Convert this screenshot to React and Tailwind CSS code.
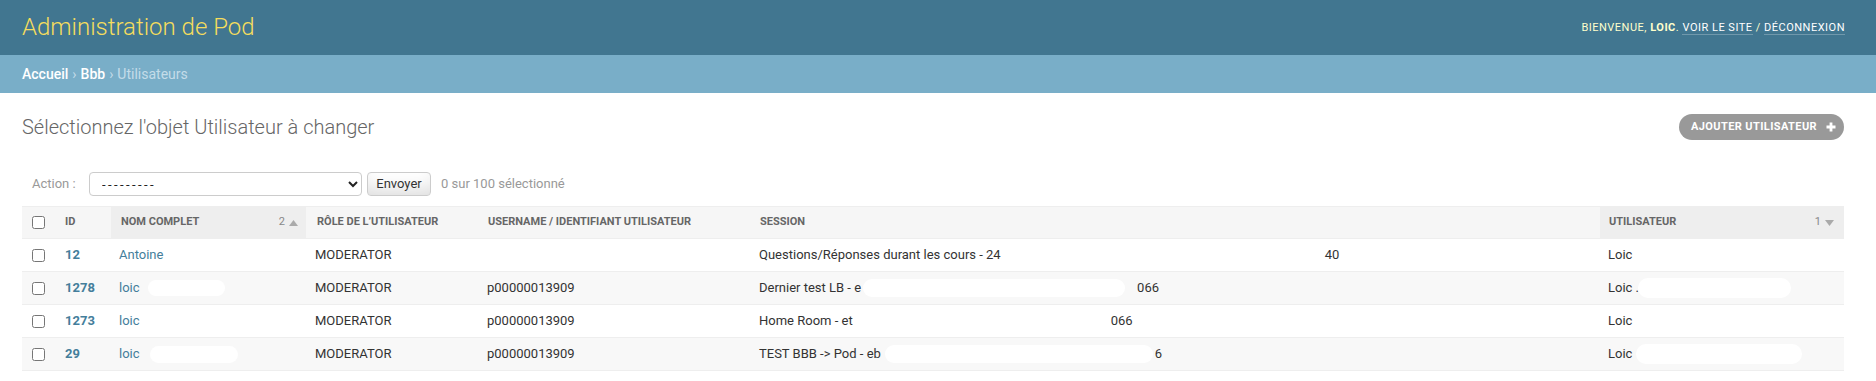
import React from "react";

const Blob = ({ w, ml = 0, h = 18 }) => (
  <span
    className="inline-block bg-white rounded-full align-middle"
    style={{ width: w, height: h, marginLeft: ml }}
  />
);

const SortUp = () => (
  <svg width="9" height="6" viewBox="0 0 9 6" className="inline-block">
    <path d="M0 6 L4.5 0 L9 6 Z" fill="#aaa" />
  </svg>
);
const SortDown = () => (
  <svg width="9" height="6" viewBox="0 0 9 6" className="inline-block">
    <path d="M0 0 L4.5 6 L9 0 Z" fill="#aaa" />
  </svg>
);

const Check = () => (
  <input type="checkbox" className="m-0 w-[13px] h-[13px] block" readOnly />
);

const rows = [
  {
    id: "12",
    name: <span>Antoine</span>,
    role: "MODERATOR",
    user: "",
    session: (
      <>
        <span>Questions/Réponses durant les cours - 24</span>
        <span className="inline-block w-[324px]" />
        <span>40</span>
      </>
    ),
    owner: <span>Loic</span>,
  },
  {
    id: "1278",
    name: (
      <>
        <span>loic</span>
        <Blob w={77} ml={8} h={16} />
      </>
    ),
    role: "MODERATOR",
    user: "p00000013909",
    session: (
      <>
        <span>Dernier test LB - e</span>
        <Blob w={262} ml={2} h={18} />
        <span className="ml-[12px]">066</span>
      </>
    ),
    owner: (
      <>
        <span>Loic .</span>
        <Blob w={153} ml={-1} h={20} />
      </>
    ),
  },
  {
    id: "1273",
    name: <span>loic</span>,
    role: "MODERATOR",
    user: "p00000013909",
    session: (
      <>
        <span>Home Room - et</span>
        <span className="inline-block w-[258px]" />
        <span>066</span>
      </>
    ),
    owner: <span>Loic</span>,
  },
  {
    id: "29",
    name: (
      <>
        <span>loic</span>
        <Blob w={88} ml={10} h={17} />
      </>
    ),
    role: "MODERATOR",
    user: "p00000013909",
    session: (
      <>
        <span>TEST BBB -&gt; Pod - eb</span>
        <Blob w={268} ml={4} h={18} />
        <span className="ml-[2px]">6</span>
      </>
    ),
    owner: (
      <>
        <span>Loic</span>
        <Blob w={166} ml={4} h={20} />
      </>
    ),
  },
  {
    id: "",
    name: null,
    role: "",
    user: "",
    session: null,
    owner: null,
  },
];

const cols = "grid grid-cols-[33px_56px_195px_172px_272px_850px_244px]";

export default function App() {
  return (
    <div className="font-['Roboto','Liberation_Sans',sans-serif] bg-white min-h-[381px] text-[#333]">
      {/* Header */}
      <div className="h-[55px] bg-[#417690] flex items-center justify-between pl-[22px] pr-[31px]">
        <div className="text-[24px] font-light text-[#f5dd5d] leading-none mb-[1px]">
          Administration de Pod
        </div>
        <div className="text-[11px] tracking-[0.5px] uppercase text-[#ffc] leading-[14px]">
          Bienvenue, <strong className="font-bold">Loic</strong>.{" "}
          <a className="text-white border-b border-white/25">Voir le site</a>
          {" / "}
          <a className="text-white border-b border-white/25">Déconnexion</a>
        </div>
      </div>

      {/* Breadcrumbs */}
      <div className="h-[38px] bg-[#79aec8] flex items-center px-[22px] text-[14px] text-[#c4dce8]">
        <a className="text-white font-medium">Accueil</a>
        <span className="mx-[4px]">›</span>
        <a className="text-white font-medium">Bbb</a>
        <span className="mx-[4px]">›</span>
        <span>Utilisateurs</span>
      </div>

      {/* Content */}
      <div className="pl-[22px] pr-[32px]">
        <div className="mt-[21px] flex justify-between items-start">
          <h1 className="mt-[1px] text-[20px] leading-[24px] font-light text-[#666]">
            Sélectionnez l'objet Utilisateur à changer
          </h1>
          <a className="h-[26px] rounded-full bg-[#999] text-white text-[11px] font-bold tracking-[0.4px] uppercase flex items-center pl-[12px] pr-[8px]">
            Ajouter utilisateur
            <svg width="10" height="10" viewBox="0 0 10 10" className="ml-[9px]">
              <path
                d="M3.6 0.5h2.8v3.1h3.1v2.8h-3.1v3.1h-2.8v-3.1h-3.1v-2.8h3.1z"
                fill="#fff"
              />
            </svg>
          </a>
        </div>

        {/* Actions */}
        <div className="mt-[32px] h-[24px] flex items-center text-[13px]">
          <span className="ml-[10px] w-[57px] text-[#999]">Action :</span>
          <select className="w-[273px] h-[24px] border border-[#ccc] rounded-[4px] bg-white pl-[8px] text-[13px] tracking-[2.4px] text-[#222]">
            <option>---------</option>
          </select>
          <button className="ml-[5px] w-[64px] h-[24px] border border-[#ccc] rounded-[4px] bg-white shadow-[inset_0_-15px_20px_-10px_rgba(0,0,0,0.15)] text-[13px] text-[#333]">
            Envoyer
          </button>
          <span className="ml-[10px] text-[#999]">0 sur 100 sélectionné</span>
        </div>

        {/* Table */}
        <div className="mt-[10px]">
          <div
            className={`${cols} h-[33px] bg-[#f6f6f6] border-t border-b border-[#eee] text-[11px] font-bold uppercase text-[#666]`}
          >
            <div className="pl-[10px] flex items-center">
              <Check />
            </div>
            <div className="pl-[10px] flex items-center">ID</div>
            <div className="bg-[#eee] pl-[10px] pr-[8px] flex items-center justify-between">
              <span>Nom complet</span>
              <span className="flex items-center gap-[4px] font-normal text-[#888]">
                2 <SortUp />
              </span>
            </div>
            <div className="pl-[11px] flex items-center">Rôle de l’utilisateur</div>
            <div className="pl-[10px] flex items-center">
              Username / Identifiant utilisateur
            </div>
            <div className="pl-[10px] flex items-center">Session</div>
            <div className="bg-[#eee] pl-[9px] pr-[10px] flex items-center justify-between">
              <span>Utilisateur</span>
              <span className="flex items-center gap-[4px] font-normal text-[#888]">
                1 <SortDown />
              </span>
            </div>
          </div>

          {rows.map((r, i) => (
            <div
              key={i}
              className={`${cols} h-[33px] border-b border-[#eee] text-[13px] ${
                i % 2 === 1 ? "bg-[#f8f8f8]" : "bg-white"
              }`}
            >
              <div className="pl-[10px] flex items-center">
                <Check />
              </div>
              <div className="pl-[10px] flex items-center font-bold text-[#447e9b]">
                {r.id}
              </div>
              <div className="pl-[8px] flex items-center text-[#447e9b] whitespace-nowrap">
                {r.name}
              </div>
              <div className="pl-[9px] flex items-center">{r.role}</div>
              <div className="pl-[9px] flex items-center">{r.user}</div>
              <div className="pl-[9px] flex items-center whitespace-nowrap">
                {r.session}
              </div>
              <div className="pl-[8px] flex items-center whitespace-nowrap">
                {r.owner}
              </div>
            </div>
          ))}
        </div>
      </div>
    </div>
  );
}
